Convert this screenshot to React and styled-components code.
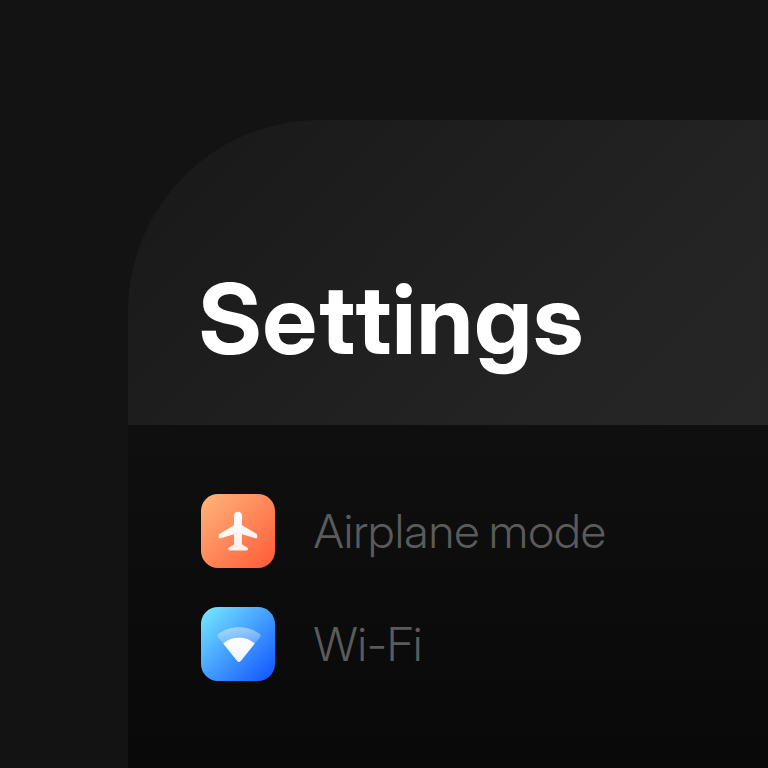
import React from "react";
import styled, { createGlobalStyle } from "styled-components";

const GlobalStyle = createGlobalStyle`
  html, body {
    margin: 0;
    background: #131313;
    overflow: hidden;
  }
`;

const Screen = styled.main`
  box-sizing: border-box;
  width: 768px;
  height: 768px;
  padding: 120px 0 0 128px;
  overflow: hidden;
  background: #131313;
  font-family: "Inter Display", Inter, "Liberation Sans", sans-serif;
`;

const Panel = styled.section`
  display: flex;
  flex-direction: column;
  height: 648px;
`;

const Header = styled.header`
  box-sizing: border-box;
  flex: none;
  height: 305px;
  padding: 141px 0 0 70.5px;
  background: linear-gradient(135deg, #181818 0%, #242424 75%, #262626 100%);
  border-top-left-radius: 192px;
`;

const Title = styled.h1`
  margin: 0;
  font-size: 97px;
  line-height: 116px;
  font-weight: 700;
  letter-spacing: 0.8px;
  color: #fff;
  white-space: nowrap;
`;

const Spaced = styled.span`
  letter-spacing: ${(p) => p.$by};
`;

const List = styled.ul`
  box-sizing: border-box;
  display: flex;
  flex: 1;
  flex-direction: column;
  gap: 38.5px;
  margin: 0;
  padding: 69px 0 0 73px;
  background: linear-gradient(180deg, #0f0f0f, #090909);
  list-style: none;
`;

const Row = styled.li`
  display: flex;
  align-items: center;
  gap: 38.5px;
  height: 74.25px;
`;

const Tile = styled.span`
  display: block;
  flex: none;
  width: 74.25px;
  height: 74.25px;
  border-radius: 17px;
  background: linear-gradient(135deg, ${(p) => p.$from}, ${(p) => p.$to});

  svg {
    display: block;
  }
`;

const Label = styled.span`
  font-size: 47px;
  line-height: 60px;
  font-weight: 300;
  letter-spacing: 0.5px;
  word-spacing: -2.5px;
  color: #5b5b5b;
  white-space: nowrap;
`;

const PlaneIcon = () => (
  <svg width="74" height="74" viewBox="0 0 74 74">
    <defs>
      <linearGradient id="plane" x1="0" y1="0" x2="0" y2="1">
        <stop offset="0" stopColor="#fff" />
        <stop offset="1" stopColor="#ffefea" />
      </linearGradient>
    </defs>
    <path
      fill="url(#plane)"
      d="M37 17.7C39.5 17.7 41 19.4 41 21.7V31.2L55 39.5Q56.3 40.3 56.3 41.7V43Q56.3 44.7 54.4 44.2L41 40.2V50.5L45.9 53.2Q47 53.9 47 55Q47 56.4 45.6 56.4H28.6Q27.2 56.4 27.2 55Q27.2 53.9 28.2 53.2L33 50.5V40.2L19.6 44.2Q17.7 44.7 17.7 43V41.7Q17.7 40.3 19 39.5L33 31.2V21.7C33 19.4 34.5 17.7 37 17.7Z"
    />
  </svg>
);

const WifiIcon = () => (
  <svg width="74" height="74" viewBox="0 0 74 74">
    <defs>
      <linearGradient id="wifiBand" x1="0" y1="0" x2="0" y2="1">
        <stop offset="0" stopColor="#f4f4f4" stopOpacity="0.48" />
        <stop offset="1" stopColor="#f4f4f4" stopOpacity="0.24" />
      </linearGradient>
      <linearGradient id="wifiFan" x1="0" y1="0" x2="0" y2="1">
        <stop offset="0" stopColor="#fff" />
        <stop offset="1" stopColor="#edf4ff" />
      </linearGradient>
    </defs>
    <g transform="translate(0 -0.8)">
      <path
        fill="url(#wifiBand)"
        d="M16.8 30.7Q15.7 29.2 17.2 27.8C22.8 23.4 29.8 21 38 21C46.2 21 53.2 23.4 58.8 27.8Q60.3 29.2 59.2 30.7L53.8 37.3C49.5 33.4 44.1 31.2 38 31.2C31.9 31.2 26.5 33.4 22.2 37.3Z"
      />
      <path
        fill="url(#wifiFan)"
        d="M22.2 37.3C26.5 33.4 31.9 31.2 38 31.2C44.1 31.2 49.5 33.4 53.8 37.3L39.8 54.8Q38 56.8 36.2 54.8Z"
      />
    </g>
  </svg>
);

export default function App() {
  return (
    <>
      <GlobalStyle />
      <Screen>
        <Panel>
          <Header>
            <Title>
              S<Spaced $by="2.2px">e</Spaced>
              <Spaced $by="0.4px">t</Spaced>tings
            </Title>
          </Header>
          <List>
            <Row>
              <Tile $from="#ffb57c" $to="#ff5a36">
                <PlaneIcon />
              </Tile>
              <Label>Airplane mode</Label>
            </Row>
            <Row>
              <Tile $from="#77ebff" $to="#0f50ff">
                <WifiIcon />
              </Tile>
              <Label>Wi-Fi</Label>
            </Row>
          </List>
        </Panel>
      </Screen>
    </>
  );
}
